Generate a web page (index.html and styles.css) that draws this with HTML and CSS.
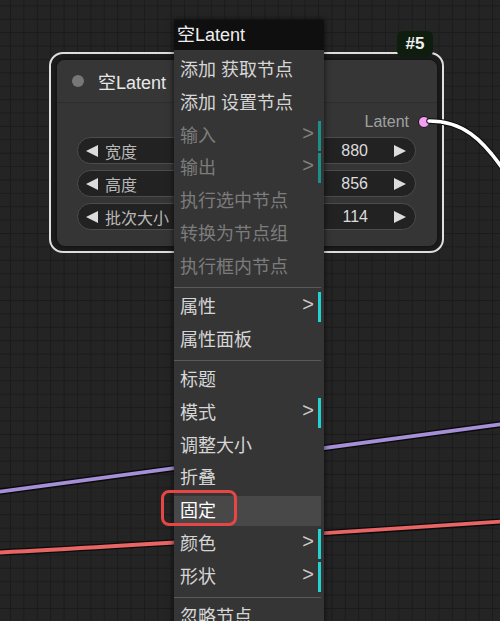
FILE: index.html
```html
<!DOCTYPE html>
<html lang="zh">
<head>
<meta charset="utf-8">
<title>ComfyUI 右键菜单</title>
<link rel="stylesheet" href="styles.css">
</head>
<body>
<div class="canvas">
  <div class="node-outline"></div>
  <div class="node">
    <div class="node-title"><span class="title-dot"></span><span class="title-text">空Latent</span></div>
    <div class="node-body">
      <div class="output-row"><span class="output-label">Latent</span><span class="slot"></span></div>
      <div class="widget">
        <svg class="arrow" viewBox="0 0 14 14" width="14" height="14"><polygon points="13,1 13,13 1,7" /></svg>
        <span class="w-label">宽度</span><span class="w-value">880</span>
        <svg class="arrow" viewBox="0 0 14 14" width="14" height="14"><polygon points="1,1 1,13 13,7" /></svg>
      </div>
      <div class="widget">
        <svg class="arrow" viewBox="0 0 14 14" width="14" height="14"><polygon points="13,1 13,13 1,7" /></svg>
        <span class="w-label">高度</span><span class="w-value">856</span>
        <svg class="arrow" viewBox="0 0 14 14" width="14" height="14"><polygon points="1,1 1,13 13,7" /></svg>
      </div>
      <div class="widget">
        <svg class="arrow" viewBox="0 0 14 14" width="14" height="14"><polygon points="13,1 13,13 1,7" /></svg>
        <span class="w-label">批次大小</span><span class="w-value">114</span>
        <svg class="arrow" viewBox="0 0 14 14" width="14" height="14"><polygon points="1,1 1,13 13,7" /></svg>
      </div>
    </div>
  </div>
  <div class="badge">#5</div>
  <svg class="wires" width="500" height="621" viewBox="0 0 500 621">
    <path class="wire-shadow" d="M -10 493 C 150 471, 330 448, 510 423" />
    <path class="wire-purple" d="M -10 493 C 150 471, 330 448, 510 423" />
    <path class="wire-shadow" d="M -10 553 C 150 545, 330 533, 510 521" />
    <path class="wire-red" d="M -10 553 C 150 545, 330 533, 510 521" />
    <path class="wire-shadow thin" d="M 429 121 C 462 121, 482 138, 505 172" />
    <path class="wire-white" d="M 429 121 C 462 121, 482 138, 505 172" />
  </svg>
  <div class="menu">
    <div class="menu-title">空Latent</div>
    <div class="menu-body">
      <div class="entry">添加 获取节点</div>
      <div class="entry">添加 设置节点</div>
      <div class="entry disabled submenu">输入</div>
      <div class="entry disabled submenu">输出</div>
      <div class="entry disabled">执行选中节点</div>
      <div class="entry disabled">转换为节点组</div>
      <div class="entry disabled">执行框内节点</div>
      <div class="separator"></div>
      <div class="entry submenu">属性</div>
      <div class="entry">属性面板</div>
      <div class="separator"></div>
      <div class="entry">标题</div>
      <div class="entry submenu">模式</div>
      <div class="entry">调整大小</div>
      <div class="entry">折叠</div>
      <div class="entry active">固定</div>
      <div class="entry submenu">颜色</div>
      <div class="entry submenu">形状</div>
      <div class="separator"></div>
      <div class="entry">忽略节点</div>
    </div>
  </div>
  <div class="annotation"></div>
</div>
</body>
</html>
```

FILE: styles.css
```css
html, body {
  margin: 0;
  padding: 0;
  width: 500px;
  height: 621px;
  overflow: hidden;
}

body {
  font-family: "Liberation Sans", "Noto Sans CJK SC", sans-serif;
  background: #232323;
}

.canvas {
  position: relative;
  width: 500px;
  height: 621px;
  overflow: hidden;
  background-color: #242424;
  background-image:
    linear-gradient(#1b1b1b 1px, transparent 1px),
    linear-gradient(90deg, #1b1b1b 1px, transparent 1px);
  background-size: 13.4px 13.4px;
  background-position: 10px 5.4px;
}

/* ---------- node ---------- */
.node-outline {
  position: absolute;
  left: 49px;
  top: 52px;
  width: 395px;
  height: 201px;
  box-sizing: border-box;
  border: 2px solid #dedede;
  border-radius: 14px;
  background: #1c1c1c;
}

.node {
  position: absolute;
  left: 57px;
  top: 60px;
  width: 380px;
  height: 186px;
  box-sizing: border-box;
  background: #353535;
  border-radius: 8px;
  box-shadow: 0 0 4px rgba(0, 0, 0, 0.6);
  display: flex;
  flex-direction: column;
}

.node-title {
  height: 42px;
  display: flex;
  align-items: center;
  padding-left: 15px;
  border-bottom: 1px solid #2d2d2d;
  background: #363636;
  border-radius: 8px 8px 0 0;
}

.title-dot {
  width: 12px;
  height: 12px;
  border-radius: 50%;
  background: #777;
}

.title-text {
  margin-left: 14px;
  font-size: 18px;
  color: #e8e8e8;
}

.node-body {
  padding: 8px 21px 0 20px;
  display: flex;
  flex-direction: column;
  gap: 6px;
}

.output-row {
  height: 22px;
  margin-bottom: -2px;
  margin-right: -14px;
  display: flex;
  align-items: center;
  justify-content: flex-end;
}

.output-label {
  font-size: 16px;
  color: #a0a0a0;
}

.slot {
  width: 10px;
  height: 10px;
  margin-left: 9px;
  border-radius: 50%;
  background: #f39ef3;
  border: 1px solid #151515;
}

.widget {
  height: 27px;
  box-sizing: border-box;
  border: 1px solid #4c4c4c;
  border-radius: 14px;
  background: #222;
  display: flex;
  align-items: center;
  padding: 0 8px 0 7px;
  font-size: 16px;
}

.arrow {
  fill: #dcdcdc;
  flex: none;
}

.w-label {
  margin-left: 6px;
  color: #b8b8b8;
  flex: 1;
}

.w-value {
  color: #dcdcdc;
  margin-right: 25px;
}

.badge {
  position: absolute;
  left: 397px;
  top: 31px;
  width: 36px;
  height: 26px;
  border-radius: 6px;
  background: #0f1d0f;
  color: #f0f0f0;
  font-weight: bold;
  font-size: 17px;
  display: flex;
  align-items: center;
  justify-content: center;
}

/* ---------- wires ---------- */
.wires {
  position: absolute;
  left: 0;
  top: 0;
}

.wires path {
  fill: none;
  stroke-linecap: round;
}

.wire-shadow {
  stroke: #0b0b0b;
  stroke-width: 6.5;
}

.wire-shadow.thin {
  stroke-width: 5.5;
}

.wire-purple {
  stroke: #a590d8;
  stroke-width: 3.8;
}

.wire-red {
  stroke: #e86565;
  stroke-width: 3.8;
}

.wire-white {
  stroke: #ffffff;
  stroke-width: 3.6;
}

/* ---------- context menu ---------- */
.menu {
  position: absolute;
  left: 174px;
  top: 20px;
  width: 150px;
  box-shadow: 0 0 6px rgba(0, 0, 0, 0.7);
  font-family: "Liberation Sans", "Noto Sans CJK SC", sans-serif;
}

.menu-title {
  height: 30px;
  line-height: 30px;
  background: #0f0f0f;
  color: #eeeeee;
  font-size: 18px;
  padding-left: 3px;
}

.menu-body {
  background: #353535;
  padding: 5px 3px 40px 0;
  display: flex;
  flex-direction: column;
  gap: 2.8px;
}

.entry {
  position: relative;
  height: 30px;
  line-height: 30px;
  padding-left: 6px;
  font-size: 18px;
  color: #d6d6d6;
  white-space: nowrap;
}

.entry.disabled {
  color: #7c7c7c;
}

.entry.active {
  background: #484848;
  color: #ffffff;
}

.entry.submenu {
  border-right: 3px solid #22d3d3;
}

.entry.disabled.submenu {
  border-right-color: #1d8f8b;
}

.entry.submenu::after {
  content: ">";
  position: absolute;
  right: 4px;
  top: -3px;
  font-family: "Liberation Sans", sans-serif;
  font-size: 20px;
  color: #c8c8c8;
}

.entry.disabled.submenu::after {
  color: #808080;
}

.separator {
  flex: none;
  height: 1px;
  margin: 2px 0 1.6px 0;
  background: #5a5a5a;
}

.annotation {
  position: absolute;
  left: 161px;
  top: 490px;
  width: 76px;
  height: 36px;
  box-sizing: border-box;
  border: 3px solid #e64646;
  border-radius: 8px;
}
```
